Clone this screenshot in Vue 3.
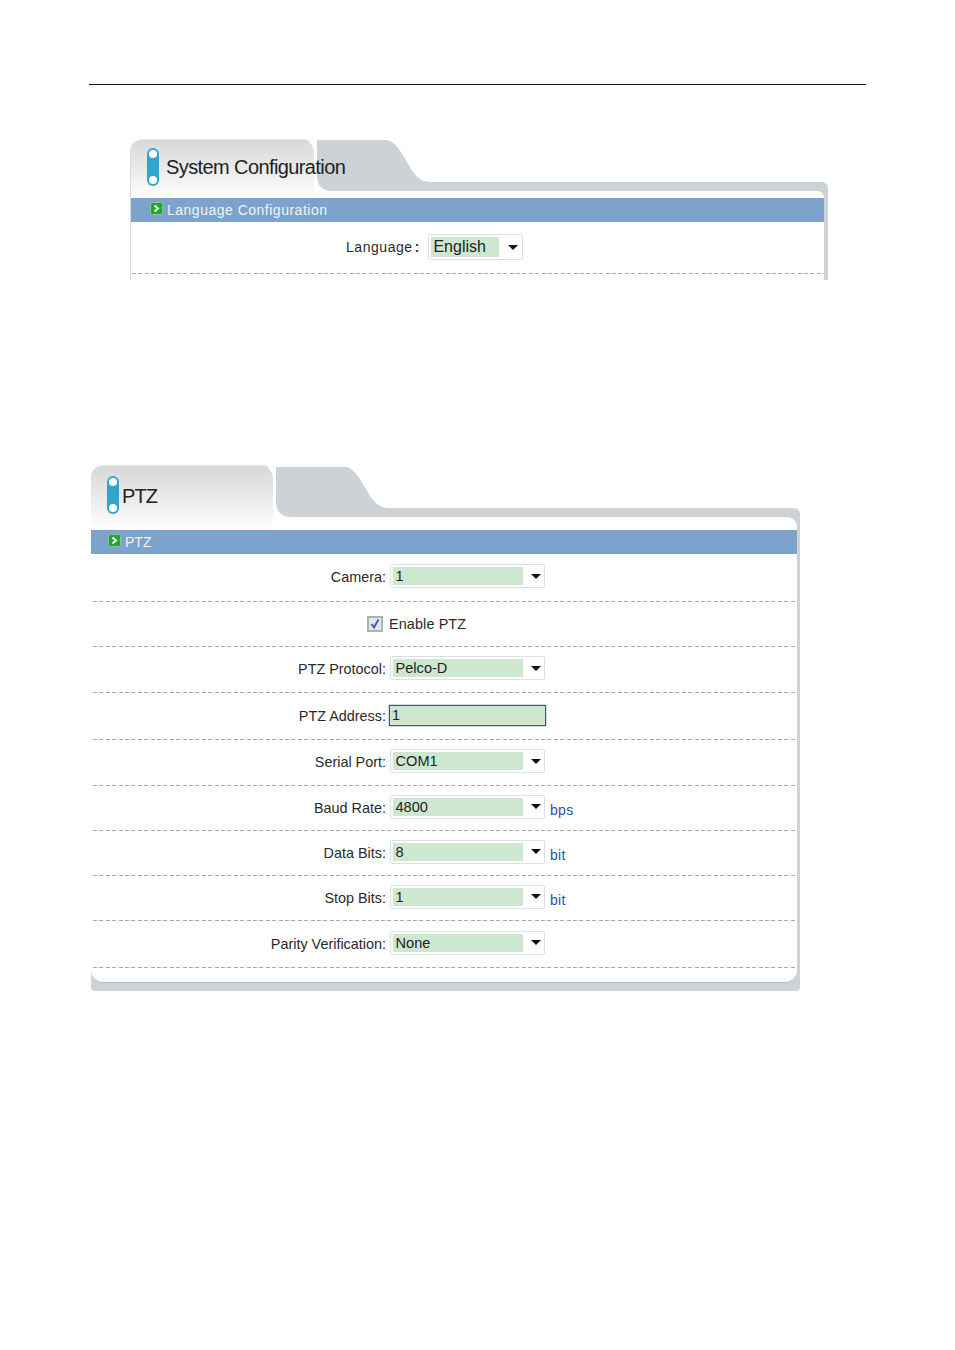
<script setup>
const ptzRows = [
  { label: 'Camera:', type: 'select', value: '1', height: 47 },
  { label: '', type: 'check', value: 'Enable PTZ', height: 44 },
  { label: 'PTZ Protocol:', type: 'select', value: 'Pelco-D', height: 45 },
  { label: 'PTZ Address:', type: 'input', value: '1', height: 46 },
  { label: 'Serial Port:', type: 'select', value: 'COM1', height: 45 },
  { label: 'Baud Rate:', type: 'select', value: '4800', unit: 'bps', height: 44 },
  { label: 'Data Bits:', type: 'select', value: '8', unit: 'bit', height: 44 },
  { label: 'Stop Bits:', type: 'select', value: '1', unit: 'bit', height: 44 },
  { label: 'Parity Verification:', type: 'select', value: 'None', height: 46 }
]
</script>

<template>
  <div class="page">
    <div class="rule"></div>

    <section class="panel panel-lang">
      <header class="head">
        <div class="tab">
          <span class="pill"></span>
          <h2 class="title">System Configuration</h2>
        </div>
        <div class="head-side">
          <div class="gray-row">
            <svg class="shoulder" viewBox="0 0 126 51" width="126" height="51" aria-hidden="true">
              <path d="M0 0H83C92 2 97 12 103 22C109 33 115 42 126 42V51H28C18 51 13 45 13 36V0Z" fill="#ccd2d6" />
            </svg>
            <div class="strip"></div>
          </div>
          <div class="corner"></div>
        </div>
      </header>
      <div class="bar">
        <svg class="bar-icon" viewBox="0 0 13 13" width="13" height="13" aria-hidden="true">
          <rect x=".5" y=".5" width="12" height="12" rx="2" fill="#10b020" stroke="#9db6a8" />
          <path d="M4.5 3.5 8 6.5 4.5 9.5" fill="none" stroke="#fff" stroke-width="2" />
        </svg>
        <span class="bar-text wide">Language Configuration</span>
      </div>
      <div class="body">
        <div class="lang-row">
          <span class="lang-label">Language<span class="lang-colon">:</span></span>
          <div class="select lang-select">
            <span class="select-value">English</span>
            <span class="arrow"></span>
          </div>
        </div>
      </div>
    </section>

    <section class="panel panel-ptz">
      <header class="head">
        <div class="tab">
          <span class="pill"></span>
          <h2 class="title">PTZ</h2>
        </div>
        <div class="head-side">
          <div class="gray-row">
            <svg class="shoulder" viewBox="0 0 126 50" width="126" height="50" aria-hidden="true">
              <path d="M0 0H83C92 2 97 12 103 22C109 33 115 41 126 41V50H28C18 50 13 44 13 35V0Z" fill="#ccd2d6" />
            </svg>
            <div class="strip"></div>
          </div>
          <div class="corner"></div>
        </div>
      </header>
      <div class="bar">
        <svg class="bar-icon" viewBox="0 0 13 13" width="13" height="13" aria-hidden="true">
          <rect x=".5" y=".5" width="12" height="12" rx="2" fill="#10b020" stroke="#9db6a8" />
          <path d="M4.5 3.5 8 6.5 4.5 9.5" fill="none" stroke="#fff" stroke-width="2" />
        </svg>
        <span class="bar-text">PTZ</span>
      </div>
      <div class="body">
        <div
          v-for="row in ptzRows"
          :key="row.value + row.label"
          class="row"
          :style="{ height: row.height + 'px' }"
        >
          <div class="label">
            <span v-if="row.type === 'check'" class="checkbox">
              <svg viewBox="0 0 12 12" width="12" height="12" aria-hidden="true">
                <path d="M2.5 6 5 9.5 9.5 1.5" fill="none" stroke="#3f5fa6" stroke-width="2" />
              </svg>
            </span>
            <template v-else>{{ row.label }}</template>
          </div>
          <span v-if="row.type === 'check'" class="check-text">{{ row.value }}</span>
          <div v-else-if="row.type === 'input'" class="address">{{ row.value }}</div>
          <div v-else class="select">
            <span class="select-value">{{ row.value }}</span>
            <span class="arrow"></span>
          </div>
          <span v-if="row.unit" class="unit">{{ row.unit }}</span>
        </div>
      </div>
      <div class="foot"></div>
    </section>
  </div>
</template>

<style>
html, body { margin: 0; background: #fff; }
</style>

<style scoped>
.page {
  height: 1350px;
  padding-top: 84px;
  box-sizing: border-box;
  overflow: hidden;
  background: #fff;
  font-family: "Liberation Sans", Arial, sans-serif;
  font-size: 14.4px;
  color: #2a2a2a;
}
.rule { height: 1px; margin: 0 89px; background: #111; }

.panel { box-sizing: border-box; }
.panel-lang {
  width: 698px;
  height: 141px;
  margin: 54px 0 0 130px;
  overflow: hidden;
  border-left: 1px solid #dcdcdc;
  border-top-left-radius: 12px;
}
.panel-ptz {
  width: 709px;
  margin: 185px 0 0 91px;
}

.head { display: flex; }
.panel-lang .head { height: 59px; }
.panel-ptz .head { height: 65px; }

.tab {
  position: relative;
  z-index: 1;
  flex: none;
  box-sizing: border-box;
  display: flex;
  align-items: flex-start;
  border-right: 3px solid #fff;
  border-top: 1px solid #e6e6e6;
  border-radius: 12px 14px 0 0;
  background: linear-gradient(#d8d8d8, #f0f0f0 65%, #fff);
}
.panel-lang .tab { width: 186px; padding: 8px 0 0 16px; }
.panel-ptz .tab { width: 185px; padding: 10px 0 0 16px; }

.pill {
  flex: none;
  position: relative;
  box-sizing: border-box;
  width: 12px;
  height: 38px;
  border-radius: 6px;
  background: #30a6cd;
}
.pill::before,
.pill::after {
  content: "";
  position: absolute;
  left: 2px;
  width: 8px;
  height: 8px;
  border-radius: 50%;
  background: #fff;
}
.pill::before { top: 2px; }
.pill::after { bottom: 2px; }

.title {
  margin: 0;
  font-size: 20px;
  font-weight: 400;
  line-height: 24px;
  white-space: nowrap;
  color: #222;
}
.panel-lang .title { margin: 7px 0 0 7px; letter-spacing: -.6px; }
.panel-ptz .title { margin: 8px 0 0 3px; letter-spacing: -.9px; }

.head-side { flex: 1; display: flex; flex-direction: column; min-width: 0; margin-left: -13px; }
.panel-lang .head-side { padding-top: 1px; }
.panel-ptz .head-side { padding-top: 2px; }
.gray-row { display: flex; align-items: flex-end; }
.shoulder { display: block; flex: none; }
.strip {
  flex: 1;
  height: 9px;
  background: #ccd2d6;
  border-top-right-radius: 6px;
}
.corner { flex: 1; background: linear-gradient(to right, #fff calc(100% - 16px), #ccd2d6 0); }
.corner::before {
  content: "";
  display: block;
  height: 100%;
  background: #fff;
  border-top-right-radius: 10px;
}
.panel-lang .corner::before { width: calc(100% - 4px); }
.panel-ptz .corner::before { width: calc(100% - 3px); }

.bar {
  display: flex;
  align-items: center;
  height: 24px;
  background: #7ca3cb;
}
.panel-lang .bar { border-right: 4px solid #ccd2d6; padding-left: 19px; }
.panel-ptz .bar { border-right: 3px solid #ccd2d6; padding-left: 17px; }
.bar-icon { flex: none; margin-top: -3px; }
.bar-text { margin-left: 4px; font-size: 14px; color: #eef3f8; }
.wide { letter-spacing: .5px; }

.panel-lang .body { border-right: 4px solid #ccd2d6; height: 58px; }
.panel-ptz .body { border-right: 3px solid #ccd2d6; }

.lang-row,
.row {
  display: flex;
  align-items: center;
  padding-bottom: 1px;
  background: repeating-linear-gradient(to right, #a8a8a8 0 4px, transparent 4px 6.4px) left bottom / 100% 1px no-repeat;
}
.lang-row { height: 51px; margin-left: 1px; }
.row { margin-left: 2px; }

.lang-label { margin-left: 214px; font-size: 14px; letter-spacing: .55px; margin-top: -2px; }
.lang-colon { margin-left: 2px; font-weight: 700; }

.label {
  flex: none;
  display: flex;
  justify-content: flex-end;
  align-items: center;
  width: 293px;
  margin: -1px 4px 0 0;
  white-space: nowrap;
}
.checkbox {
  display: flex;
  align-items: center;
  justify-content: center;
  box-sizing: border-box;
  width: 16px;
  height: 16px;
  margin-right: 3px;
  border: 2px solid #b0b0b0;
  background: #e3e7f0;
}
.check-text { margin: -1px 0 0 -1px; letter-spacing: .12px; }

.select {
  flex: none;
  box-sizing: border-box;
  display: flex;
  align-items: center;
  width: 155px;
  height: 24px;
  margin-top: -3px;
  padding: 2px;
  background: #fff;
  border: 1px solid #dadfe3;
  border-radius: 2px;
}
.select-value {
  box-sizing: border-box;
  width: 130px;
  height: 18px;
  padding-left: 2.5px;
  font-size: 14.6px;
  line-height: 18px;
  background: #cde8cf;
  color: #222;
}
.arrow {
  width: 0;
  height: 0;
  margin-left: 8px;
  border: solid transparent;
  border-width: 5px 5px 0;
  border-top-color: #111;
}
.panel-lang .select { width: 95px; height: 26px; margin: -1px 0 0 8px; }
.panel-lang .select-value { width: 68px; height: 20px; font-size: 16px; line-height: 20px; }
.panel-lang .arrow { margin-left: 9px; }

.address {
  flex: none;
  box-sizing: border-box;
  width: 157px;
  height: 21px;
  margin: -1px 0 0 -1px;
  padding-left: 2px;
  line-height: 19px;
  background: #cde8cf;
  border: 1px solid #2d55b0;
  box-shadow: 0 0 0 .5px rgba(45, 85, 176, .45);
  color: #222;
}
.unit {
  margin: 3px 0 0 5px;
  font-size: 14px;
  letter-spacing: .3px;
  color: #2c50a5;
}

.foot {
  height: 23px;
  background: #ccd2d6;
  border-radius: 0 0 4px 4px;
}
.foot::before {
  content: "";
  display: block;
  width: calc(100% - 3px);
  height: 15px;
  background: #fff;
  border-radius: 0 0 12px 12px;
  border-bottom: 1px solid #b8bcc0;
  box-sizing: border-box;
}
</style>
